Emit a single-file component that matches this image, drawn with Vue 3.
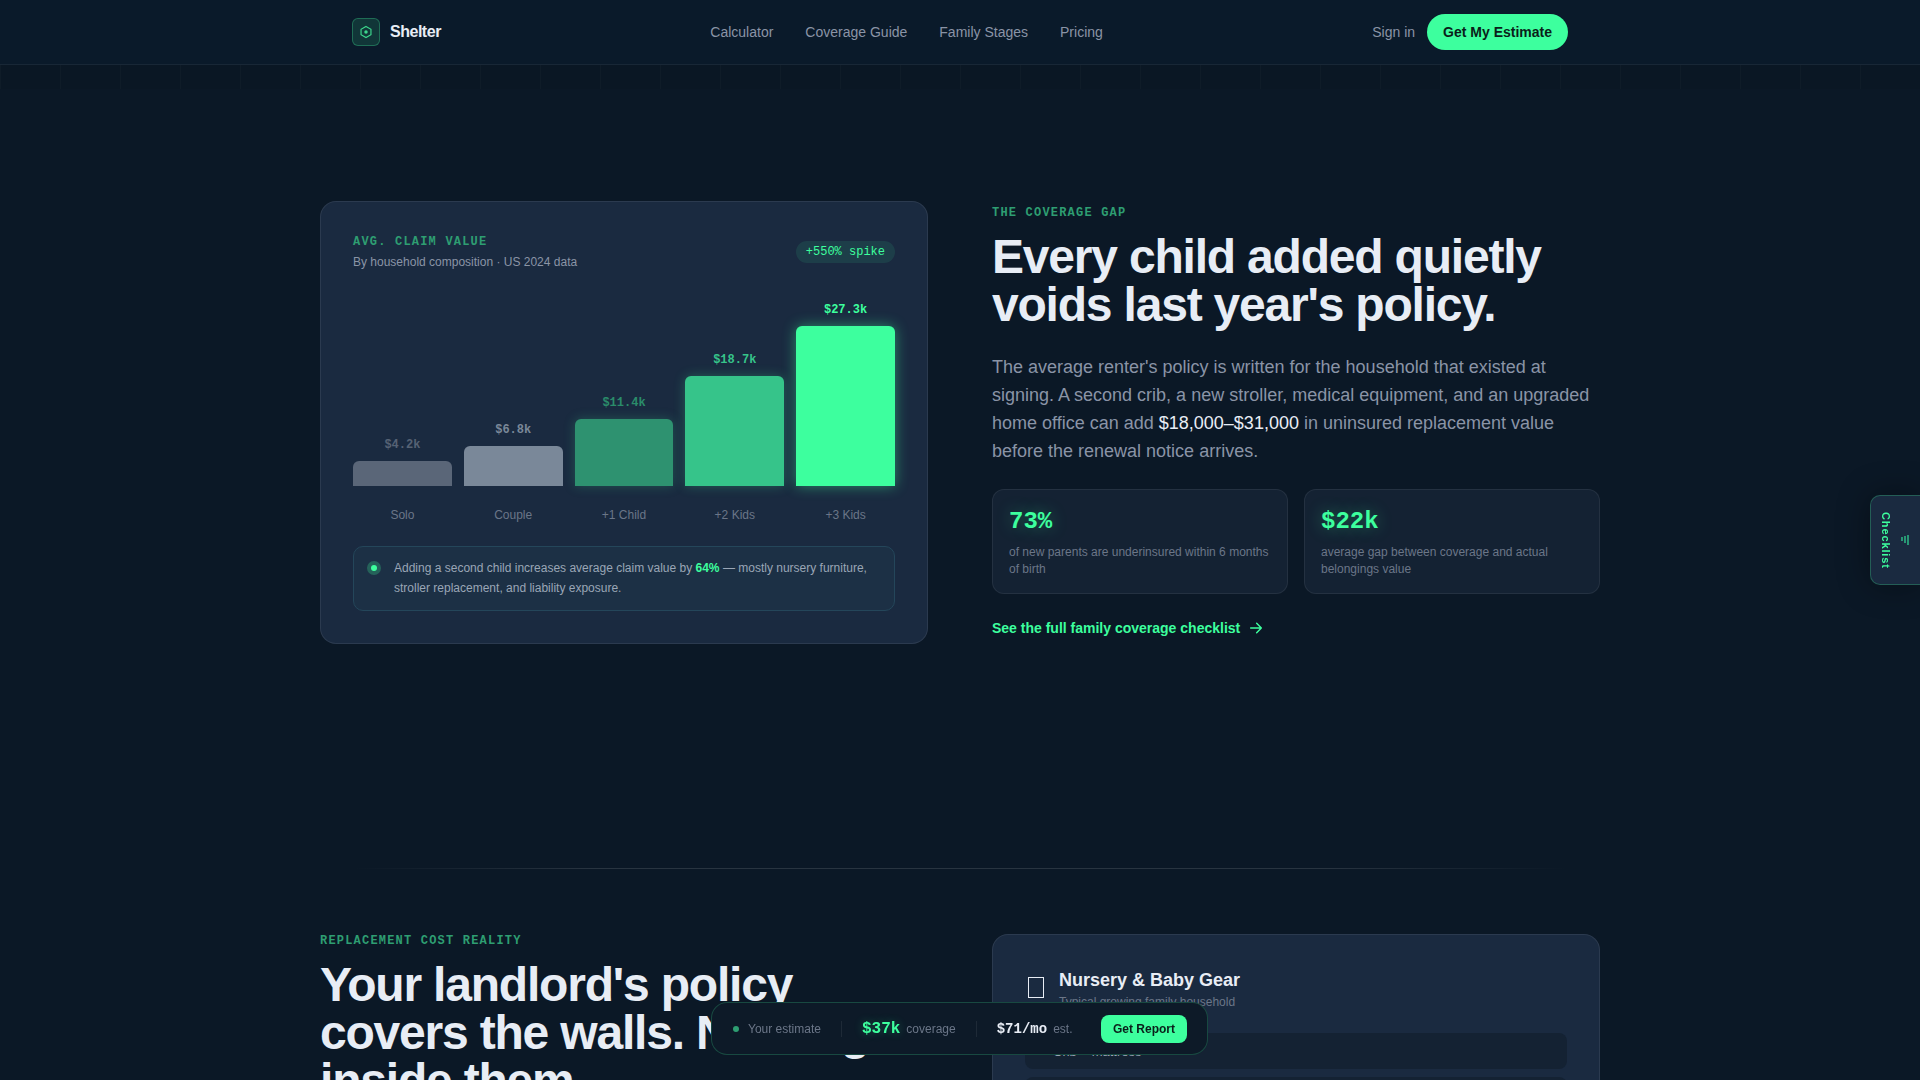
<template>
  <div class="page">
    <nav class="nav">
      <div class="nav-inner">
        <a class="brand">
          <span class="brand-mark">
            <svg width="14" height="14" viewBox="0 0 24 24" fill="none" stroke="#3dd68c" stroke-width="2">
              <path d="M12 2.5l8.5 4.8v9.4L12 21.5l-8.5-4.8V7.3z" />
              <circle cx="12" cy="12" r="3" fill="#3dd68c" stroke="none" />
            </svg>
          </span>
          <span class="brand-name">Shelter</span>
        </a>
        <div class="nav-links">
          <a v-for="link in navLinks" :key="link">{{ link }}</a>
        </div>
        <div class="nav-actions">
          <a class="sign-in">Sign in</a>
          <button class="nav-cta">Get My Estimate</button>
        </div>
      </div>
    </nav>
    <div class="grid-strip"></div>

    <section class="section hero">
      <div class="chart-card">
        <div class="chart-head">
          <div>
            <div class="chart-label">AVG. CLAIM VALUE</div>
            <div class="chart-sub">By household composition · US 2024 data</div>
          </div>
          <span class="spike">+550% spike</span>
        </div>
        <div class="bars">
          <div v-for="bar in bars" :key="bar.name" class="bar-col">
            <span class="bar-value" :class="bar.kind">{{ bar.value }}</span>
            <div class="bar" :class="bar.kind" :style="{ height: bar.height + 'px' }"></div>
          </div>
        </div>
        <div class="bar-names">
          <span v-for="bar in bars" :key="bar.name">{{ bar.name }}</span>
        </div>
        <div class="callout">
          <span class="callout-dot"></span>
          <p>Adding a second child increases average claim value by <b>64%</b> — mostly nursery furniture, stroller replacement, and liability exposure.</p>
        </div>
      </div>

      <div class="hero-copy">
        <div class="eyebrow">THE COVERAGE GAP</div>
        <h1>Every child added quietly voids last year's policy.</h1>
        <p class="lead">
          The average renter's policy is written for the household that existed at signing. A second crib, a new stroller, medical equipment, and an upgraded home office can add <strong>$18,000–$31,000</strong> in uninsured replacement value before the renewal notice arrives.
        </p>
        <div class="stats">
          <div v-for="stat in stats" :key="stat.value" class="stat">
            <div class="stat-value">{{ stat.value }}</div>
            <div class="stat-text">{{ stat.text }}</div>
          </div>
        </div>
        <a class="more">
          See the full family coverage checklist
          <svg width="16" height="16" viewBox="0 0 24 24" fill="none" stroke="currentColor" stroke-width="2.2" stroke-linecap="round" stroke-linejoin="round">
            <path d="M4 12h16M13 5l7 7-7 7" />
          </svg>
        </a>
      </div>
    </section>

    <div class="divider"></div>

    <section class="section reality">
      <div>
        <div class="eyebrow">REPLACEMENT COST REALITY</div>
        <h1>Your landlord's policy covers the walls. Nothing inside them.</h1>
      </div>
      <div class="gear-card">
        <div class="gear-head">
          <span class="tofu"></span>
          <div>
            <div class="gear-title">Nursery &amp; Baby Gear</div>
            <div class="gear-sub">Typical growing family household</div>
          </div>
        </div>
        <div class="gear-row">Crib + mattress</div>
        <div class="gear-row">Stroller system</div>
      </div>
    </section>

    <aside class="tab">
      <svg width="12" height="12" viewBox="0 0 12 12" fill="none" stroke="#2fc48a" stroke-width="1.4">
        <path d="M9 1v10M6 2v7M3 3v4" />
      </svg>
      <span>Checklist</span>
    </aside>

    <div class="estimate-bar">
      <span class="est-dot"></span>
      <span class="est-label">Your estimate</span>
      <span class="est-sep"></span>
      <span class="est-coverage">$37k</span>
      <span class="est-label">coverage</span>
      <span class="est-sep"></span>
      <span class="est-month">$71/mo</span>
      <span class="est-label">est.</span>
      <button class="est-btn">Get Report</button>
    </div>
  </div>
</template>

<script setup>
const navLinks = ["Calculator", "Coverage Guide", "Family Stages", "Pricing"];

const bars = [
  { name: "Solo", value: "$4.2k", height: 25, kind: "b1" },
  { name: "Couple", value: "$6.8k", height: 40, kind: "b2" },
  { name: "+1 Child", value: "$11.4k", height: 67, kind: "b3" },
  { name: "+2 Kids", value: "$18.7k", height: 110, kind: "b4" },
  { name: "+3 Kids", value: "$27.3k", height: 160, kind: "b5" },
];

const stats = [
  { value: "73%", text: "of new parents are underinsured within 6 months of birth" },
  { value: "$22k", text: "average gap between coverage and actual belongings value" },
];
</script>

<style>
html,
body {
  margin: 0;
  background: #0b1826;
}
html {
  scrollbar-width: none;
}
</style>

<style scoped>
.page {
  min-height: 100vh;
  background: #0b1826;
  color: #e8edf5;
  font-family: "Liberation Sans", Arial, sans-serif;
}

.nav {
  height: 64px;
  border-bottom: 1px solid rgba(255, 255, 255, 0.06);
  background: #0a1a2a;
}
.nav-inner {
  max-width: 1216px;
  height: 100%;
  margin: 0 auto;
  display: flex;
  justify-content: space-between;
  align-items: center;
}
.brand {
  display: flex;
  align-items: center;
  gap: 10px;
}
.brand-mark {
  width: 28px;
  height: 28px;
  box-sizing: border-box;
  border: 1px solid rgba(61, 214, 140, 0.35);
  border-radius: 6px;
  background: rgba(61, 214, 140, 0.15);
  display: flex;
  align-items: center;
  justify-content: center;
}
.brand-name {
  font-size: 16px;
  font-weight: 700;
  letter-spacing: -0.03em;
}
.nav-links {
  display: flex;
  gap: 32px;
  font-size: 14px;
  color: #8a94a6;
}
.nav-actions {
  display: flex;
  align-items: center;
  gap: 12px;
}
.sign-in {
  font-size: 14px;
  color: #8a94a6;
}
.nav-cta {
  height: 36px;
  padding: 0 16px;
  border: 0;
  border-radius: 18px;
  background: #3dff9e;
  color: #0a1f1a;
  font: 700 14px "Liberation Sans", Arial, sans-serif;
}

.grid-strip {
  height: 24px;
  background-color: #0a1724;
  background-image: linear-gradient(90deg, rgba(255, 255, 255, 0.018) 1px, transparent 1px);
  background-size: 60px 60px;
}

.section {
  width: 1280px;
  margin: 0 auto;
  display: grid;
  grid-template-columns: 608px 608px;
  gap: 64px;
}
.hero {
  padding: 112px 0 224px;
}
.reality {
  padding-top: 65px;
}

.chart-card {
  box-sizing: border-box;
  height: 443px;
  padding: 33px 32px 32px;
  border: 1px solid rgba(255, 255, 255, 0.08);
  border-radius: 16px;
  background: #1a2a40;
}
.chart-head {
  display: flex;
  justify-content: space-between;
  align-items: center;
}
.chart-label {
  font: 700 12px "Liberation Mono", monospace;
  letter-spacing: 0.1em;
  color: #2e9e72;
}
.chart-sub {
  margin-top: 6px;
  font-size: 12px;
  color: #8a94a6;
}
.spike {
  padding: 4px 10px;
  border-radius: 12px;
  background: rgba(61, 214, 140, 0.12);
  font: 12px "Liberation Mono", monospace;
  color: #3dff9e;
}
.bars {
  height: 200px;
  margin-top: 17px;
  display: flex;
  gap: 12px;
  align-items: flex-end;
}
.bar-col {
  flex: 1;
  display: flex;
  flex-direction: column;
  align-items: center;
  gap: 9px;
}
.bar-value {
  font: 700 12px "Liberation Mono", monospace;
}
.bar {
  width: 100%;
  border-radius: 6px 6px 0 0;
}
.bar-value.b1 {
  color: #566274;
}
.bar-value.b2 {
  color: #7a8899;
}
.bar-value.b3 {
  color: #2a8c6a;
}
.bar-value.b4 {
  color: #36c48a;
}
.bar-value.b5 {
  color: #3dff9e;
}
.bar.b1 {
  background: #5a6678;
}
.bar.b2 {
  background: #7a8899;
}
.bar.b3 {
  background: #2e9270;
  box-shadow: 0 0 12px rgba(61, 214, 140, 0.25);
}
.bar.b4 {
  background: #36c48a;
  box-shadow: 0 0 12px rgba(61, 214, 140, 0.3);
}
.bar.b5 {
  background: #3dff9e;
  box-shadow: 0 0 14px rgba(61, 255, 158, 0.45);
}
.bar-names {
  margin-top: 22px;
  display: flex;
  gap: 12px;
  font-size: 12px;
  color: #6b7688;
}
.bar-names span {
  flex: 1;
  text-align: center;
}
.callout {
  box-sizing: border-box;
  height: 65px;
  margin-top: 24px;
  padding: 11px 14px;
  display: flex;
  gap: 12px;
  border: 1px solid #24465a;
  border-radius: 10px;
  background: #1c3045;
}
.callout-dot {
  flex: none;
  width: 6px;
  height: 6px;
  margin: 7px 5px 0 3px;
  border-radius: 50%;
  background: #3dff9e;
  box-shadow: 0 0 0 4px rgba(61, 214, 140, 0.3);
}
.callout p {
  margin: 0;
  font-size: 12px;
  line-height: 20px;
  color: #9aa6b6;
}
.callout b {
  color: #3dff9e;
}

.eyebrow {
  font: 700 12px "Liberation Mono", monospace;
  letter-spacing: 0.1em;
  color: #2e9e72;
}
h1 {
  margin: 13px 0 0;
  font-size: 48px;
  line-height: 48px;
  font-weight: 700;
  letter-spacing: -0.025em;
  color: #e8edf5;
}
.hero-copy {
  padding-top: 5px;
}
.lead {
  margin: 24px 0 0;
  font-size: 18px;
  line-height: 28px;
  color: #8a94a6;
}
.lead strong {
  font-weight: 400;
  color: #e8edf5;
}
.stats {
  margin-top: 24px;
  display: grid;
  grid-template-columns: 1fr 1fr;
  gap: 16px;
}
.stat {
  height: 105px;
  box-sizing: border-box;
  padding: 16px;
  border: 1px solid rgba(255, 255, 255, 0.07);
  border-radius: 12px;
  background: #142233;
}
.stat-value {
  font: 700 24px/32px "Liberation Mono", monospace;
  color: #3dff9e;
  text-shadow: 0 0 16px rgba(61, 255, 158, 0.35);
}
.stat-text {
  margin-top: 6px;
  font-size: 12px;
  line-height: 17px;
  color: #6b7688;
}
.more {
  margin-top: 26px;
  display: inline-flex;
  align-items: center;
  gap: 8px;
  font-size: 14px;
  font-weight: 700;
  color: #3dff9e;
}

.divider {
  width: 1216px;
  height: 1px;
  margin: 0 auto;
  background: linear-gradient(90deg, transparent, rgba(255, 255, 255, 0.12) 20%, rgba(255, 255, 255, 0.12) 80%, transparent);
}

.gear-card {
  height: 300px;
  box-sizing: border-box;
  padding: 32px;
  border: 1px solid rgba(255, 255, 255, 0.08);
  border-radius: 16px;
  background: #1a2a40;
}
.gear-head {
  display: flex;
  align-items: center;
  gap: 15px;
  height: 40px;
  margin-top: 2px;
  margin-bottom: 24px;
}
.tofu {
  width: 16px;
  height: 21px;
  margin: 0 0 4px 3px;
  box-sizing: border-box;
  border: 1px solid #e8edf5;
}
.gear-title {
  font-size: 18px;
  font-weight: 700;
}
.gear-sub {
  margin-top: 4px;
  font-size: 12px;
  color: #6b7688;
}
.gear-row {
  height: 36px;
  box-sizing: border-box;
  margin-bottom: 8px;
  padding: 2px 28px 0;
  border-radius: 8px;
  background: #142233;
  font-size: 13px;
  line-height: 34px;
  color: #9aa6b6;
}

.tab {
  position: fixed;
  right: 0;
  top: 495px;
  width: 50px;
  height: 90px;
  box-sizing: border-box;
  border: 1px solid rgba(61, 214, 140, 0.3);
  border-right: 0;
  border-radius: 10px 0 0 10px;
  background: #1a2a40;
  display: flex;
  flex-direction: row-reverse;
  justify-content: center;
  align-items: center;
  gap: 7px;
  color: #3dff9e;
  font-size: 11px;
  font-weight: 700;
  box-shadow: 0 0 32px rgba(0, 0, 0, 0.4);
}
.tab span {
  writing-mode: vertical-rl;
  letter-spacing: 0.08em;
}

.estimate-bar {
  position: fixed;
  left: 711px;
  bottom: 25px;
  width: 497px;
  height: 53px;
  box-sizing: border-box;
  padding: 0 20px 0 21px;
  border: 1px solid rgba(61, 214, 140, 0.25);
  border-radius: 16px;
  background: #0d1a28;
  display: flex;
  align-items: center;
  gap: 8px;
}
.est-dot {
  width: 6px;
  height: 6px;
  margin-right: 1px;
  border-radius: 50%;
  background: #2e9e72;
}
.est-label {
  font-size: 12px;
  color: #6b7688;
}
.est-sep {
  width: 1px;
  height: 16px;
  margin: 0 12px;
  background: rgba(255, 255, 255, 0.07);
}
.est-coverage {
  margin-right: -2px;
  font: 700 16px "Liberation Mono", monospace;
  color: #3dff9e;
  text-shadow: 0 0 10px rgba(61, 255, 158, 0.3);
}
.est-month {
  margin-right: -2px;
  font: 700 14px "Liberation Mono", monospace;
  color: #e8edf5;
}
.est-btn {
  height: 28px;
  margin-left: auto;
  padding: 0 12px;
  border: 0;
  border-radius: 8px;
  background: #3dff9e;
  color: #0a1f1a;
  font: 700 12px "Liberation Sans", Arial, sans-serif;
}
</style>
